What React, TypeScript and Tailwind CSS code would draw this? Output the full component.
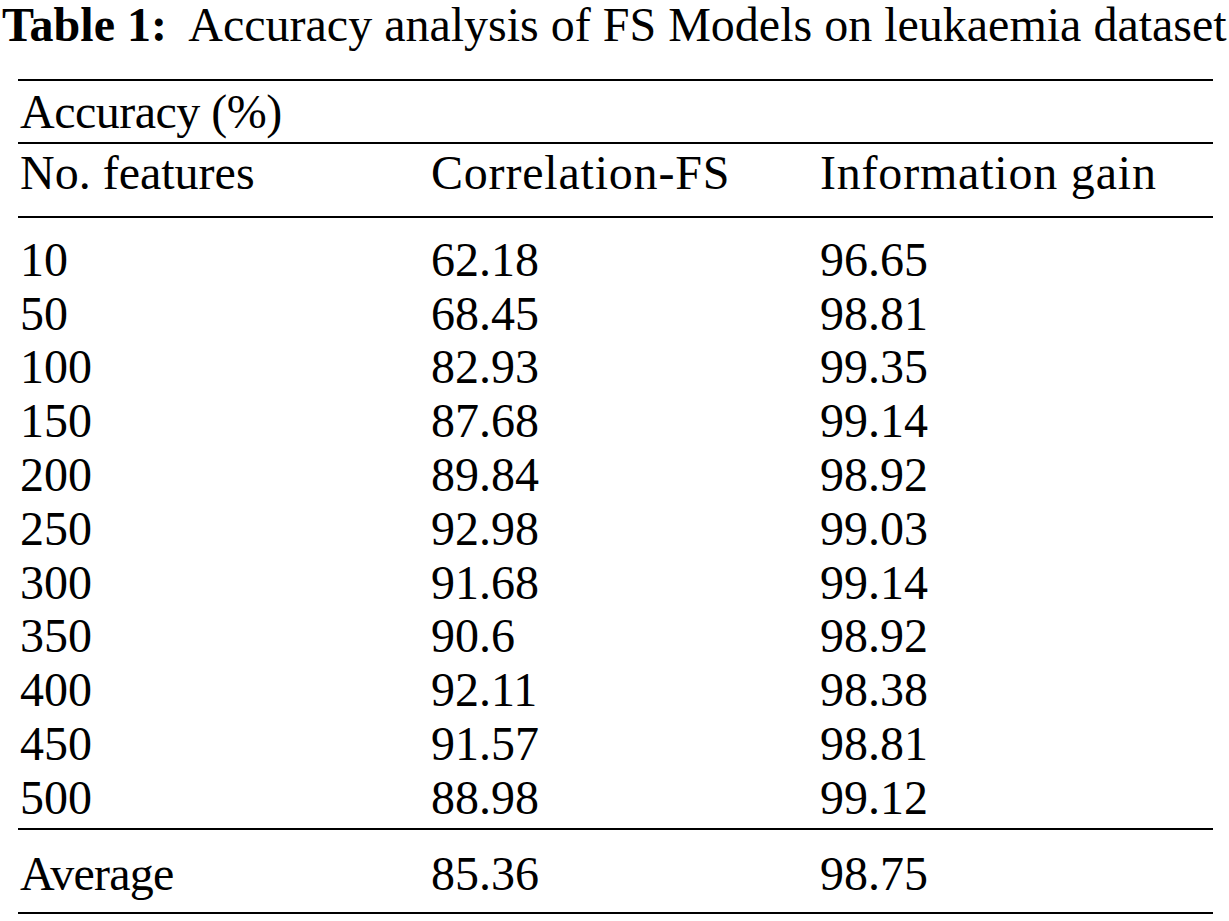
import React from "react";

const rows: [string, string, string][] = [
  ["10", "62.18", "96.65"],
  ["50", "68.45", "98.81"],
  ["100", "82.93", "99.35"],
  ["150", "87.68", "99.14"],
  ["200", "89.84", "98.92"],
  ["250", "92.98", "99.03"],
  ["300", "91.68", "99.14"],
  ["350", "90.6", "98.92"],
  ["400", "92.11", "98.38"],
  ["450", "91.57", "98.81"],
  ["500", "88.98", "99.12"],
];

function Row({
  cells,
  h,
  t = ["", "", ""],
}: {
  cells: [string, string, string];
  h: string;
  t?: [string, string, string];
}) {
  return (
    <div className={`flex items-center ${h}`}>
      <div className={`w-[413px] pl-[2px] ${t[0]}`}>{cells[0]}</div>
      <div className={`w-[389px] ${t[1]}`}>{cells[1]}</div>
      <div className={t[2]}>{cells[2]}</div>
    </div>
  );
}

export default function App() {
  return (
    <div
      className="w-[1229px] h-[921px] bg-white text-black text-[48px] leading-none"
      style={{ fontFamily: '"Liberation Serif", "Times New Roman", serif' }}
    >
      <div className="h-[79px] pt-[1px] pl-[2px] whitespace-pre">
        <span className="font-bold">Table 1:</span>
        <span>{"  Accuracy analysis of FS Models on leukaemia dataset"}</span>
      </div>
      <div className="ml-[18px] w-[1195px]">
        <div className="border-t-2 border-black h-[63px] flex items-center pl-[2px] tracking-[-0.5px]">
          Accuracy (%)
        </div>
        <div className="border-t-2 border-black h-[74px] pb-[14px] flex items-center">
          <Row
            cells={["No. features", "Correlation-FS", "Information gain"]}
            h="h-[60px]"
            t={["", "tracking-[0.8px]", "tracking-[0.8px]"]}
          />
        </div>
        <div className="border-t-2 border-black pt-[15px] h-[612px]">
          {rows.map((r) => (
            <Row key={r[0]} cells={r} h="h-[53.8px]" />
          ))}
        </div>
        <div className="border-t-2 border-black h-[84px] pt-[6px] flex items-center">
          <Row cells={["Average", "85.36", "98.75"]} h="h-[60px]" t={["tracking-[-0.8px]", "", ""]} />
        </div>
        <div className="border-t-2 border-black" />
      </div>
    </div>
  );
}
